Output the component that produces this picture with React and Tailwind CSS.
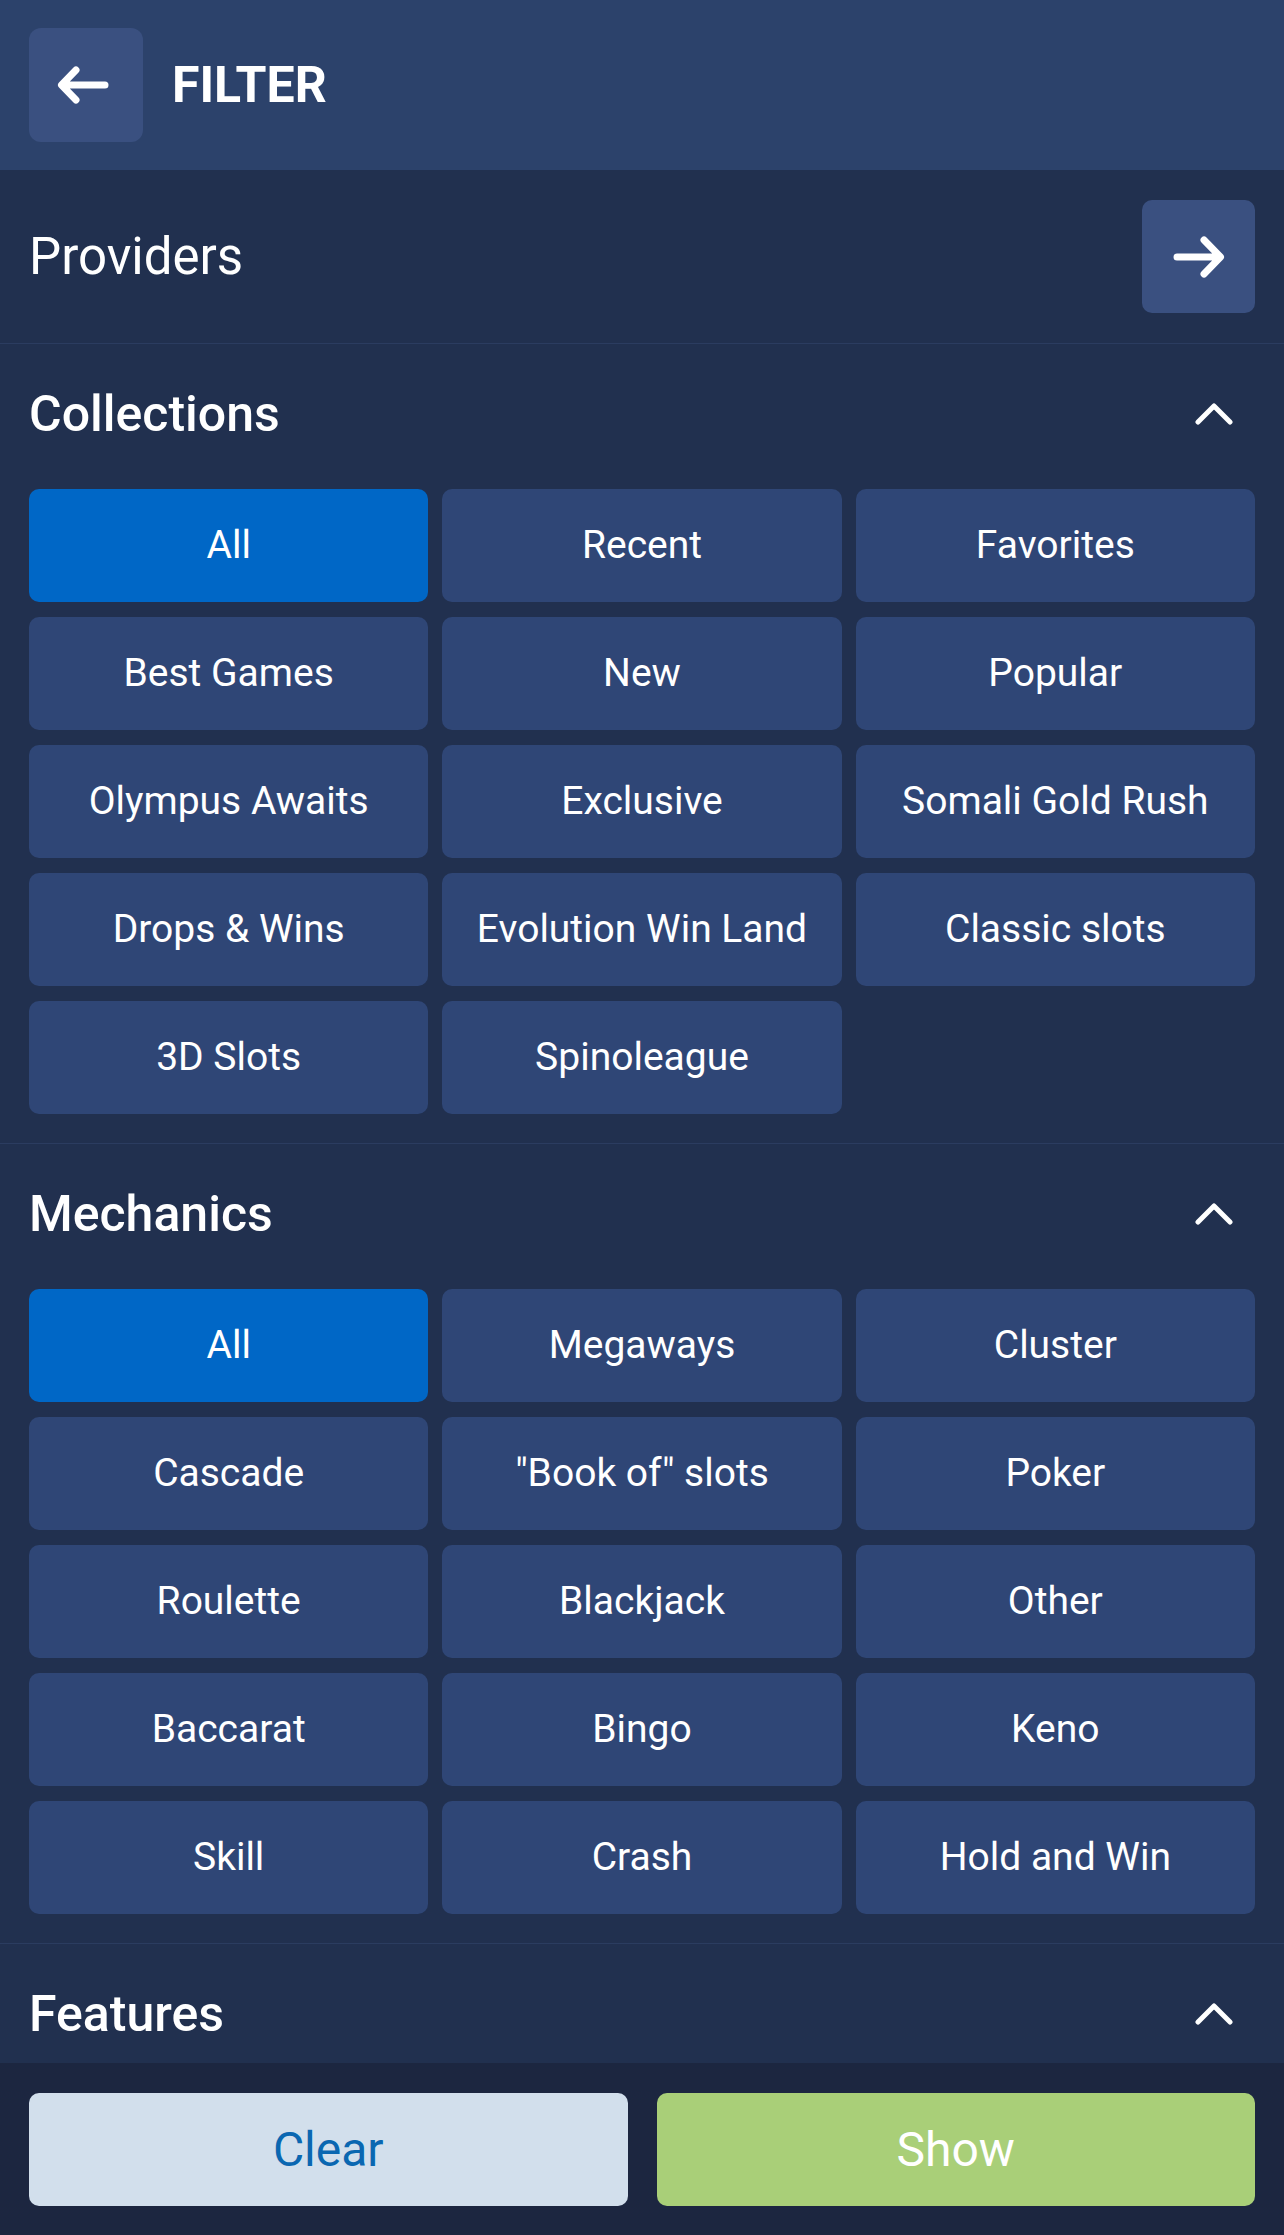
import { useState } from 'react';

// Filter screen: providers link, collection / mechanics chips, sticky footer
const COLLECTIONS = [
  'All', 'Recent', 'Favorites',
  'Best Games', 'New', 'Popular',
  'Olympus Awaits', 'Exclusive', 'Somali Gold Rush',
  'Drops & Wins', 'Evolution Win Land', 'Classic slots',
  '3D Slots', 'Spinoleague',
];

const MECHANICS = [
  'All', 'Megaways', 'Cluster',
  'Cascade', '"Book of" slots', 'Poker',
  'Roulette', 'Blackjack', 'Other',
  'Baccarat', 'Bingo', 'Keno',
  'Skill', 'Crash', 'Hold and Win',
];

function ArrowLeft() {
  return (
    <svg width="52" height="38" viewBox="0 0 52 38" fill="none">
      <path d="M48 19H5M19 4 4.5 19 19 34" stroke="white" strokeWidth="7" strokeLinecap="round" strokeLinejoin="round" />
    </svg>
  );
}

function ArrowRight() {
  return (
    <svg width="52" height="44" viewBox="0 0 52 44" fill="none">
      <path d="M4 22h43M31 5l16.5 17L31 39" stroke="white" strokeWidth="7" strokeLinecap="round" strokeLinejoin="round" />
    </svg>
  );
}

function Caret() {
  return (
    <svg width="38" height="24" viewBox="0 0 38 24" fill="none">
      <path d="M3 20 19 4l16 16" stroke="white" strokeWidth="5" strokeLinecap="round" strokeLinejoin="round" />
    </svg>
  );
}

function Section({ title, items, selected, onSelect, last }) {
  return (
    <section className={`px-[29px] pt-[30px] pb-[29px] ${last ? '' : 'border-b border-[#2b3c60]'}`}>
      <div className="h-[80px] flex items-center justify-between">
        <h2 className="text-[50px] font-medium text-white leading-none">{title}</h2>
        <div className="pr-[22px]">
          <Caret />
        </div>
      </div>
      {items && (
        <div className="mt-[35px] grid grid-cols-3 gap-x-[14px] gap-y-[15px]">
          {items.map((label, i) => (
            <button
              key={label + i}
              onClick={() => onSelect(i)}
              className={`h-[113px] rounded-[10px] text-[39px] text-white leading-none flex items-center justify-center ${
                selected === i ? 'bg-[#0067c6]' : 'bg-[#2f4676]'
              }`}
            >
              {label}
            </button>
          ))}
        </div>
      )}
    </section>
  );
}

export default function App() {
  const [collection, setCollection] = useState(0);
  const [mechanic, setMechanic] = useState(0);

  return (
    <div className="h-screen flex flex-col bg-[#21304f] font-['Roboto','Liberation_Sans',sans-serif] overflow-hidden">
      {/* header */}
      <header className="h-[170px] shrink-0 bg-[#2c426b] px-[29px] flex items-center gap-[29px]">
        <button className="w-[114px] h-[114px] rounded-[12px] bg-[#3a5080] flex items-center justify-center pr-[6px]">
          <ArrowLeft />
        </button>
        <h1 className="text-[50px] font-bold text-white leading-none">FILTER</h1>
      </header>

      <main className="flex-1 overflow-hidden">
        {/* providers link */}
        <div className="h-[174px] px-[29px] flex items-center justify-between border-b border-[#2b3c60]">
          <span className="text-[51px] text-white leading-none">Providers</span>
          <button className="w-[113px] h-[113px] rounded-[10px] bg-[#3a5080] flex items-center justify-center">
            <ArrowRight />
          </button>
        </div>

        <Section title="Collections" items={COLLECTIONS} selected={collection} onSelect={setCollection} />
        <Section title="Mechanics" items={MECHANICS} selected={mechanic} onSelect={setMechanic} />
        <Section title="Features" last />
      </main>

      {/* footer actions */}
      <footer className="h-[172px] shrink-0 bg-[#1c2640] px-[29px] pt-[30px] grid grid-cols-2 gap-x-[29px]">
        <button className="h-[113px] rounded-[10px] bg-[#d2dfec] text-[#0a67b1] text-[48px] leading-none">
          Clear
        </button>
        <button className="h-[113px] rounded-[10px] bg-[#a9cf78] text-white text-[48px] leading-none">
          Show
        </button>
      </footer>
    </div>
  );
}
